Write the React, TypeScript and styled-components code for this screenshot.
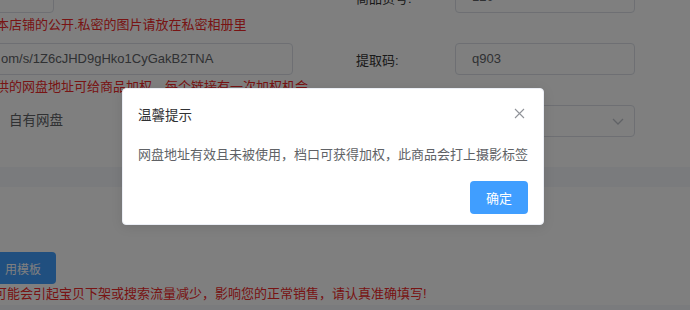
import React from 'react'
import styled, { createGlobalStyle } from 'styled-components'

const GlobalStyle = createGlobalStyle`
    html, body {
        margin: 0;
        padding: 0;
        background: #fff;
        font-family: "Liberation Sans", "Noto Sans CJK SC", sans-serif;
        font-size: 13px;
        color: #606266;
    }
`;

const Page = styled.div`
    position: relative;
    width: 690px;
    height: 310px;
    overflow: hidden;
    background: #fff;
`;

const Form = styled.div`
    margin-top: -19px;
`;

const Row = styled.div`
    display: grid;
    grid-template-columns: 345px 1fr;
`;

const LeftCell = styled.div`
    display: flex;
    flex-direction: column;
`;

const RightCell = styled.div`
    display: flex;
    align-items: center;
    height: 32px;
`;

const Input = styled.div<{ $width: number }>`
    box-sizing: border-box;
    width: ${p => p.$width}px;
    height: 32px;
    margin-left: -10px;
    padding-left: 10px;
    border: 1px solid #dcdfe6;
    border-radius: 4px;
    line-height: 30px;
    color: #606266;
    white-space: nowrap;
    overflow: hidden;
`;

const Hint = styled.div`
    height: 30px;
    margin-left: -4px;
    line-height: 24px;
    color: #f02828;
    white-space: nowrap;
`;

const RadioLabel = styled.div`
    height: 32px;
    line-height: 32px;
    padding-left: 9px;
    color: #606266;
    font-size: 13.5px;
`;

const Label = styled.div<{ $required?: boolean }>`
    display: flex;
    align-items: center;
    width: 110px;
    color: #333;
    padding-left: ${p => (p.$required ? 0 : 11)}px;
    box-sizing: border-box;
`;

const Star = styled.span`
    width: 11px;
    color: #f56c6c;
`;

const FieldBox = styled.div`
    box-sizing: border-box;
    position: relative;
    width: 180px;
    height: 32px;
    padding-left: 16px;
    border: 1px solid #dcdfe6;
    border-radius: 4px;
    line-height: 30px;
    color: #606266;
`;

const Chevron = styled.svg`
    position: absolute;
    right: 10px;
    top: 12px;
`;

const Spacer = styled.div<{ $h: number }>`
    height: ${p => p.$h}px;
`;

const Band = styled.div<{ $h: number }>`
    height: ${p => p.$h}px;
    background: #f5f7fa;
`;

const TemplateButton = styled.div`
    display: inline-flex;
    align-items: center;
    height: 32px;
    margin-left: -20px;
    padding: 0 15px 0 25px;
    border-radius: 4px;
    background: #409eff;
    color: #fff;
    font-size: 12px;
`;

const Warn = styled.div`
    height: 20px;
    margin-left: -6px;
    line-height: 20px;
    color: #f02828;
    white-space: nowrap;
`;

const Overlay = styled.div`
    position: absolute;
    inset: 0;
    background: rgba(0, 0, 0, 0.5);
    display: flex;
    align-items: center;
    justify-content: center;
    padding: 2px 24px 0 0;
`;

const Dialog = styled.div`
    position: relative;
    box-sizing: border-box;
    width: 422px;
    padding-bottom: 10px;
    background: #fff;
    border: 1px solid #ebeef5;
    border-radius: 4px;
    box-shadow: 0 2px 12px 0 rgba(0, 0, 0, 0.1);
`;

const Header = styled.div`
    padding: 19px 15px 10px;
`;

const Title = styled.div`
    font-size: 13.5px;
    line-height: 16px;
    color: #303133;
`;

const Close = styled.svg`
    position: absolute;
    top: 19px;
    right: 18px;
`;

const Content = styled.div`
    padding: 9px 15px;
    line-height: 24px;
    color: #606266;
`;

const Buttons = styled.div`
    display: flex;
    justify-content: flex-end;
    padding: 5px 15px 0;
`;

const PrimaryButton = styled.div`
    display: flex;
    align-items: center;
    justify-content: center;
    width: 58px;
    height: 33px;
    border-radius: 4px;
    background: #409eff;
    color: #fff;
    font-size: 13px;
`;

const App = () => {
    return (
        <Page>
            <GlobalStyle />
            <Form>
                <Row>
                    <LeftCell>
                        <Input $width={64} />
                        <Hint>本店铺的公开.私密的图片请放在私密相册里</Hint>
                    </LeftCell>
                    <RightCell>
                        <Label $required>
                            <Star>*</Star>商品货号:
                        </Label>
                        <FieldBox>120</FieldBox>
                    </RightCell>
                </Row>
                <Row>
                    <LeftCell>
                        <Input $width={303}>om/s/1Z6cJHD9gHko1CyGakB2TNA</Input>
                        <Hint>供的网盘地址可给商品加权，每个链接有一次加权机会</Hint>
                    </LeftCell>
                    <RightCell>
                        <Label>提取码:</Label>
                        <FieldBox>q903</FieldBox>
                    </RightCell>
                </Row>
                <Row>
                    <LeftCell>
                        <RadioLabel>自有网盘</RadioLabel>
                    </LeftCell>
                    <RightCell>
                        <Label />
                        <FieldBox>
                            <Chevron width="12" height="7" viewBox="0 0 12 7">
                                <polyline points="1,1 6,6 11,1" fill="none" stroke="#c0c4cc" strokeWidth="1.3" />
                            </Chevron>
                        </FieldBox>
                    </RightCell>
                </Row>
            </Form>
            <Spacer $h={30} />
            <Band $h={20} />
            <Spacer $h={65} />
            <TemplateButton>用模板</TemplateButton>
            <Warn>可能会引起宝贝下架或搜索流量减少，影响您的正常销售，请认真准确填写!</Warn>
            <Spacer $h={1} />
            <Band $h={10} />

            <Overlay>
                <Dialog>
                    <Header>
                        <Title>温馨提示</Title>
                    </Header>
                    <Close width="11" height="11" viewBox="0 0 11 11">
                        <path d="M1 1 L10 10 M10 1 L1 10" stroke="#909399" strokeWidth="1.1" />
                    </Close>
                    <Content>网盘地址有效且未被使用，档口可获得加权，此商品会打上摄影标签</Content>
                    <Buttons>
                        <PrimaryButton>确定</PrimaryButton>
                    </Buttons>
                </Dialog>
            </Overlay>
        </Page>
    )
}

export default App
